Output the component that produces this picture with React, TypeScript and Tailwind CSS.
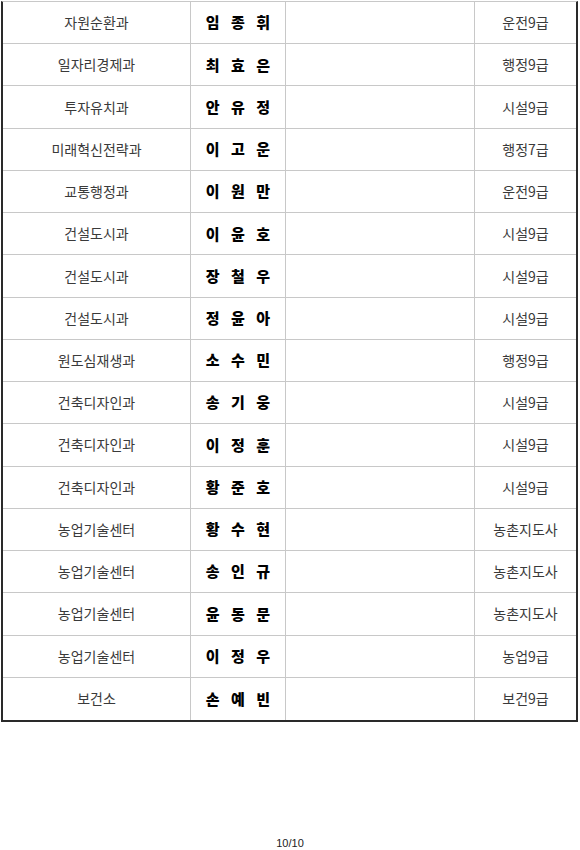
import React from 'react';

const rows: [string, string, string][] = [
  ['자원순환과', '임 종 휘', '운전9급'],
  ['일자리경제과', '최 효 은', '행정9급'],
  ['투자유치과', '안 유 정', '시설9급'],
  ['미래혁신전략과', '이 고 운', '행정7급'],
  ['교통행정과', '이 원 만', '운전9급'],
  ['건설도시과', '이 윤 호', '시설9급'],
  ['건설도시과', '장 철 우', '시설9급'],
  ['건설도시과', '정 윤 아', '시설9급'],
  ['원도심재생과', '소 수 민', '행정9급'],
  ['건축디자인과', '송 기 웅', '시설9급'],
  ['건축디자인과', '이 정 훈', '시설9급'],
  ['건축디자인과', '황 준 호', '시설9급'],
  ['농업기술센터', '황 수 현', '농촌지도사'],
  ['농업기술센터', '송 인 규', '농촌지도사'],
  ['농업기술센터', '윤 동 문', '농촌지도사'],
  ['농업기술센터', '이 정 우', '농업9급'],
  ['보건소', '손 예 빈', '보건9급'],
];

export default function App() {
  return (
    <div className="w-[580px] h-[850px] bg-white relative font-['Noto_Sans_CJK_KR',sans-serif]">
      <div className="pt-px pl-px pr-[2px]">
        <div className="border-l-2 border-r-2 border-b-2 border-[#2a2a2a] border-t border-t-[#c8c8c8]">
          {rows.map(([dept, name, grade], i) => (
            <div
              key={i}
              className={`flex h-[42.24px] ${i < rows.length - 1 ? 'border-b border-[#c8c8c8]' : ''}`}
            >
              <div className="w-[188px] flex items-center justify-center text-[14px] text-[#3a3a3a] border-r border-[#c8c8c8]">
                {dept}
              </div>
              <div className="w-[95px] flex items-center justify-center pl-[4px] text-[15px] font-black text-black tracking-[4px] whitespace-pre border-r border-[#c8c8c8]">
                {name}
              </div>
              <div className="w-[189px] border-r border-[#c8c8c8]" />
              <div className="flex-1 flex items-center justify-center text-[14px] text-[#3a3a3a]">
                {grade}
              </div>
            </div>
          ))}
        </div>
      </div>
      <div className="absolute left-0 right-0 top-[835px] text-center text-[11px] text-[#222] font-['Liberation_Sans',sans-serif]">
        10/10
      </div>
    </div>
  );
}
